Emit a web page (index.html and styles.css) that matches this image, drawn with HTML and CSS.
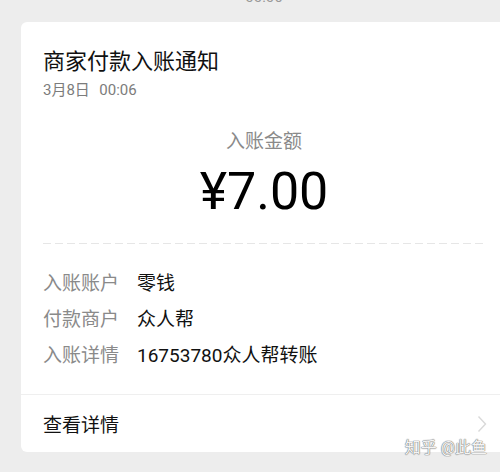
FILE: index.html
```html
<!DOCTYPE html>
<html lang="zh-CN">
<head>
  <meta charset="UTF-8" />
  <meta name="viewport" content="width=device-width, initial-scale=1.0"/>
  <title>商家付款入账通知</title>
  <link rel="stylesheet" href="styles.css">
</head>
<body>

  <div class="clock">00:06</div>

  <div class="card">
    <div class="card-body">
      <h1 class="title">商家付款入账通知</h1>
      <div class="date">3月8日&nbsp;&nbsp;00:06</div>

      <div class="amount-label">入账金额</div>
      <div class="amount">¥7.00</div>

      <div class="dashed"></div>

      <ul class="rows">
        <li><span class="label">入账账户</span><span class="value">零钱</span></li>
        <li><span class="label">付款商户</span><span class="value">众人帮</span></li>
        <li><span class="label">入账详情</span><span class="value">16753780众人帮转账</span></li>
      </ul>
    </div>

    <div class="card-foot">
      <span>查看详情</span>
      <svg class="chevron" width="10" height="18" viewBox="0 0 10 18">
        <polyline points="1.5,1.5 8.5,9 1.5,16.5" fill="none" stroke="#d9d9d9" stroke-width="1.4" />
      </svg>
    </div>
  </div>

  <div class="watermark">知乎 @此鱼</div>

</body>
</html>
```

FILE: styles.css
```css
html, body {
  height: 100%;
}
body {
  margin: 0;
  background: #ededed;
  font-family: Roboto, "Noto Sans CJK SC", sans-serif;
  color: #111;
  overflow: hidden;
  position: relative;
}
/* time stamp above the card, cut off by the top edge as in the chat view */
.clock {
  margin: -11px 0 0 21px;
  width: 486px;
  height: 33px;
  line-height: 16px;
  font-size: 15px;
  color: #999;
  text-align: center;
}
.card {
  margin-left: 21px;
  width: 486px;
  background: #fff;
  border-radius: 6px;
}
.card-body {
  padding: 26px 22px 20px 22px;
}
.title {
  margin: 0;
  font-size: 22px;
  line-height: 28px;
  font-weight: normal;
  color: #111;
}
.date {
  margin-top: 4px;
  font-size: 15px;
  line-height: 20px;
  color: #7c7c7c;
  word-spacing: 1px;
}
.amount-label {
  margin-top: 29px;
  font-size: 19px;
  line-height: 26px;
  color: #8a8a8a;
  text-align: center;
}
.amount {
  margin-top: 5px;
  font-size: 52px;
  line-height: 64px;
  text-align: center;
  color: #000;
}
.dashed {
  margin-top: 19px;
  height: 1px;
  background: repeating-linear-gradient(to right, #e6e6e6 0 8px, transparent 8px 12px);
}
.rows {
  list-style: none;
  margin: 0;
  padding: 22px 0 0 0;
}
.rows li {
  display: flex;
  font-size: 19px;
  line-height: 36px;
}
.label {
  width: 94px;
  color: #8a8a8a;
}
.value {
  color: #111;
}
.card-foot {
  display: flex;
  align-items: center;
  justify-content: space-between;
  height: 57px;
  padding: 0 20px 0 22px;
  border-top: 1px solid #efefef;
  font-size: 19px;
  color: #111;
}
.chevron {
  display: block;
}
.watermark {
  position: absolute;
  right: 13px;
  top: 439px;
  font-size: 16px;
  line-height: 18px;
  color: #f4f4f4;
  text-shadow: 0 0 1px #777, 0 0 1px #777, 0 0 1px #999;
}
```
